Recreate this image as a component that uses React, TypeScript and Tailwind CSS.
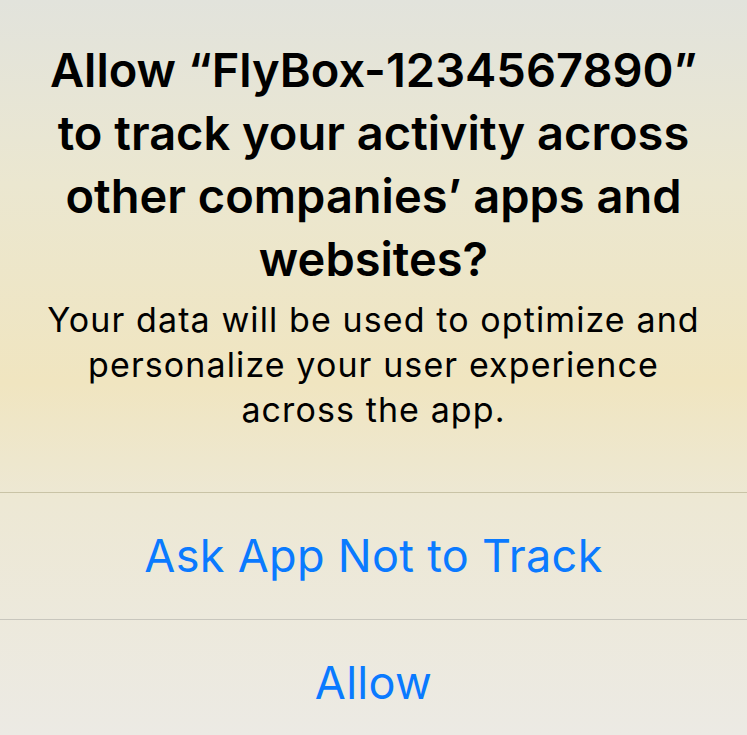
export default function App() {
  return (
    <div
      className="w-[747px] h-[735px] overflow-hidden flex flex-col bg-[linear-gradient(180deg,#e2e3dc_0%,#ebe7d0_25%,#f0e5c0_52%,#ede8d4_68%,#eceae4_100%)]"
      style={{ fontFamily: "Inter, 'Noto Sans', sans-serif" }}
    >
      {/* Message */}
      <div className="h-[492px] shrink-0 flex flex-col items-center pt-[38px] px-2 text-center">
        <h1 className="text-[47px] leading-[63px] font-semibold text-black tracking-[0px] whitespace-nowrap">
          Allow “FlyBox-1234567890”
          <br />
          to track your activity across
          <br />
          other companies’ apps and
          <br />
          websites?
        </h1>
        <p className="mt-[7px] text-[34px] leading-[45px] text-black tracking-[1.1px] whitespace-nowrap">
          Your data will be used to optimize and
          <br />
          personalize your user experience
          <br />
          across the app.
        </p>
      </div>

      {/* Actions */}
      <button className="h-[127px] shrink-0 border-t border-[#c9c3a6] text-[45px] text-[#0a7aff] tracking-[0.3px]">
        Ask App Not to Track
      </button>
      <button className="h-[127px] shrink-0 border-t border-[#c8c6bd] text-[45px] text-[#0a7aff] tracking-[0.3px]">
        Allow
      </button>
    </div>
  );
}
